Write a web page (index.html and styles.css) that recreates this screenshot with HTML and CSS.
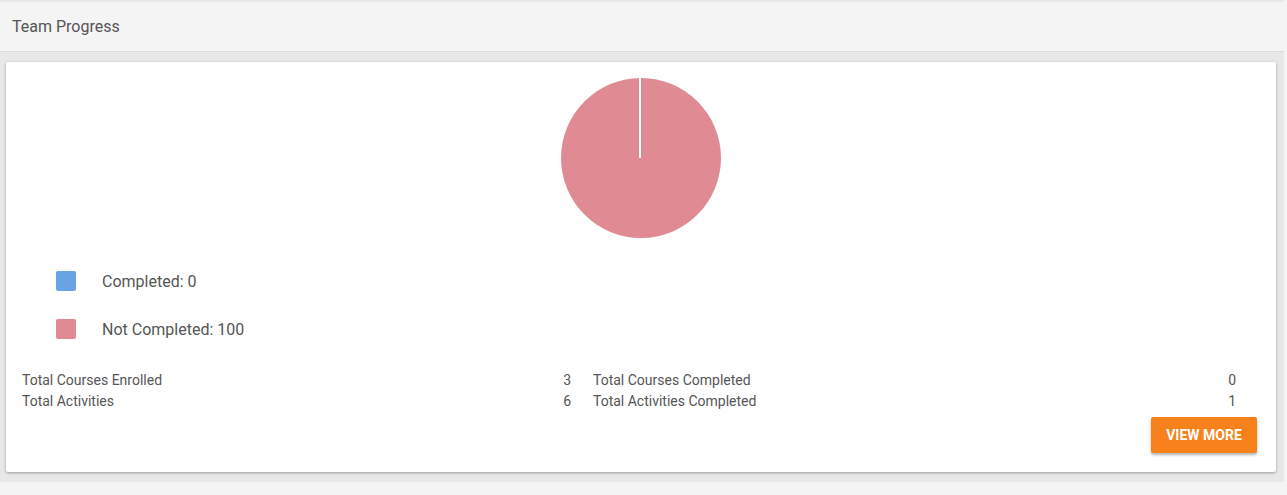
FILE: index.html
```html
<!DOCTYPE html>
<html>
<head>
<meta charset="utf-8">
<link rel="stylesheet" href="styles.css">
</head>
<body>
<div class="panel">
  <div class="panel-head">Team Progress</div>
  <div class="panel-body">
    <div class="card">
      <div class="chart">
        <svg width="162" height="162" viewBox="0 0 162 162">
          <circle cx="81" cy="81" r="80" fill="#e08a93"/>
          <line x1="80" y1="81" x2="80" y2="0" stroke="#ffffff" stroke-width="2"/>
        </svg>
      </div>
      <div class="legend">
        <div class="legend-item"><span class="swatch blue"></span><span class="legend-label">Completed: 0</span></div>
        <div class="legend-item"><span class="swatch pink"></span><span class="legend-label">Not Completed: 100</span></div>
      </div>
      <div class="stats">
        <div class="stat-col left">
          <div class="row"><span>Total Courses Enrolled</span><span>3</span></div>
          <div class="row"><span>Total Activities</span><span>6</span></div>
        </div>
        <div class="stat-col right">
          <div class="row"><span>Total Courses Completed</span><span>0</span></div>
          <div class="row"><span>Total Activities Completed</span><span>1</span></div>
        </div>
      </div>
      <div class="actions">
        <button class="btn">VIEW MORE</button>
      </div>
    </div>
  </div>
</div>
</body>
</html>
```
FILE: styles.css
```css
* { box-sizing: border-box; }
html, body { margin: 0; padding: 0; }
body {
  background: #f4f4f4;
  font-family: Roboto, "Liberation Sans", sans-serif;
  color: #555;
}
.panel {
  width: 1284px;
  background: #e8e8e8;
  padding-top: 2px;
  padding-bottom: 10px;
}
.panel-head {
  height: 50px;
  background: #f4f4f4;
  border-bottom: 1px solid #dcdcdc;
  padding-left: 12px;
  font-size: 16px;
  line-height: 49px;
  color: #555;
}
.panel-body {
  padding: 10px 8px 0 6px;
}
.card {
  background: #fff;
  height: 410px;
  box-shadow: 0 1px 3px rgba(0,0,0,0.35);
  border-radius: 2px;
  padding: 15px 16px 0 16px;
}
.chart {
  display: flex;
  justify-content: center;
  height: 162px;
}
.chart svg { display: block; }
.legend {
  padding: 32px 0 0 34px;
  display: flex;
  flex-direction: column;
  gap: 28px;
}
.legend-item {
  display: flex;
  align-items: center;
  height: 20px;
  font-size: 16px;
  color: #555;
}
.legend-label { padding-top: 1px; }
.swatch {
  width: 20px;
  height: 20px;
  border-radius: 2px;
  margin-right: 26px;
}
.swatch.blue { background: #68a3e5; }
.swatch.pink { background: #e08a93; }
.stats {
  display: flex;
  margin-top: 31px;
  font-size: 14px;
  color: #555;
}
.stat-col { display: flex; flex-direction: column; }
.stat-col.left { width: 549px; margin-right: 22px; }
.stat-col.right { width: 643px; }
.row {
  display: flex;
  justify-content: space-between;
  height: 21px;
  line-height: 21px;
}
.actions {
  display: flex;
  justify-content: flex-end;
  padding-right: 3px;
  margin-top: 5px;
}
.btn {
  background: #f7811a;
  color: #fff;
  border: none;
  border-radius: 2px;
  width: 106px;
  height: 36px;
  font-family: Roboto, "Liberation Sans", sans-serif;
  font-weight: 700;
  font-size: 14px;
  box-shadow: 0 2px 3px rgba(0,0,0,0.3);
  padding: 0;
}
```
